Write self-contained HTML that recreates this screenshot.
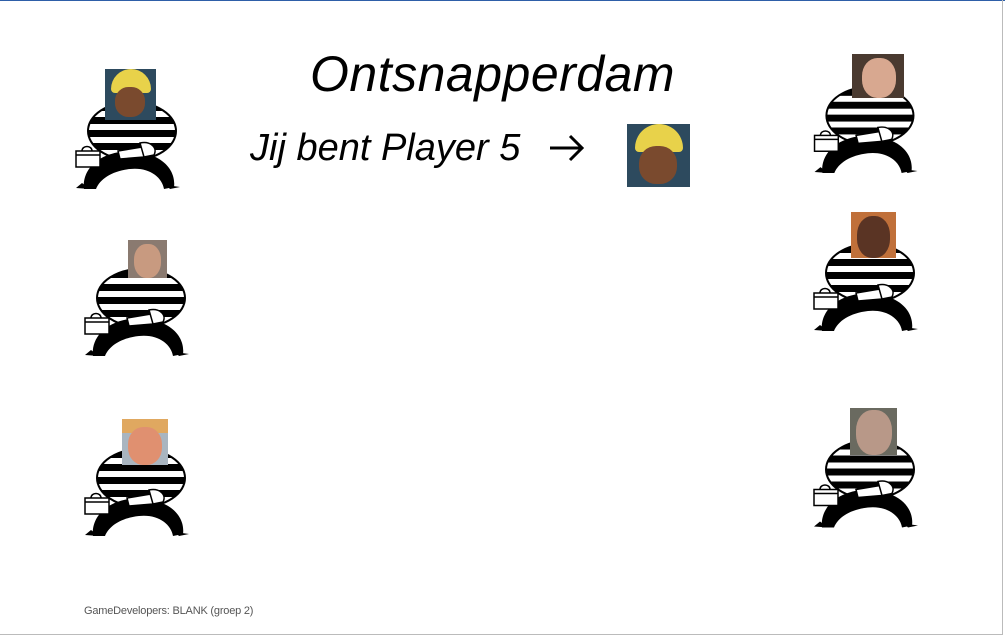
<!DOCTYPE html>
<html><head><meta charset="utf-8"><style>
html,body{margin:0;padding:0;background:#fff;}
body{width:1005px;height:637px;position:relative;overflow:hidden;font-family:"Liberation Sans",sans-serif;}
.top{position:absolute;left:0;top:0;width:1005px;height:1px;background:#2e5fa8;}
.right{position:absolute;left:1002px;top:0;width:1px;height:635px;background:#bbb;}
.bot{position:absolute;left:0;top:634px;width:1003px;height:1px;background:#bbb;}
.title{position:absolute;left:310px;top:45px;font-size:50px;font-style:italic;color:#000;letter-spacing:0.5px;white-space:nowrap;}
.sub{position:absolute;left:250px;top:127px;font-size:38px;font-style:italic;color:#000;white-space:nowrap;}
.foot{position:absolute;left:84px;top:605px;font-size:11px;color:#555;letter-spacing:-0.2px;}
.fig{position:absolute;}
.face{position:absolute;overflow:hidden;}
</style></head><body>
<div class="top"></div><div class="right"></div><div class="bot"></div>
<svg width="0" height="0" style="position:absolute">
<defs>
<clipPath id="tc"><ellipse cx="58" cy="36" rx="44" ry="29"/></clipPath>
<symbol id="pr" viewBox="0 0 106 96">
<g clip-path="url(#tc)">
<rect x="0" y="0" width="106" height="96" fill="#fff"/>
<g fill="#000">
<rect x="10" y="9" width="100" height="7"/><rect x="10" y="22" width="100" height="7"/>
<rect x="10" y="35" width="100" height="7"/><rect x="10" y="48" width="100" height="7"/>
<rect x="10" y="60" width="100" height="7"/>
</g></g>
<ellipse cx="58" cy="36" rx="44" ry="29" fill="none" stroke="#000" stroke-width="2"/>
<path d="M10 94 C8 78 20 58 55 56 C92 58 102 78 100 92 L90 94 C88 82 75 72 56 74 C38 76 26 84 22 94 Z" fill="#000"/>
<path d="M8 88 L2 93 L16 94 Z M92 90 L106 92 L96 94 Z" fill="#000"/>
<rect x="2" y="56" width="24" height="16" fill="#fff" stroke="#000" stroke-width="1.5"/>
<path d="M2 60 L26 60 M8 56 C8 50 18 50 18 56" fill="none" stroke="#000" stroke-width="1.5"/>
<path d="M44 56 L68 52 L70 62 L46 64 Z" fill="#fff" stroke="#000" stroke-width="1.5"/>
<path d="M66 48 C76 46 84 52 80 60 L70 62 Z" fill="#fff" stroke="#000" stroke-width="1.5"/>
</symbol>
</defs></svg>

<div class="title">Ontsnapperdam</div>
<div class="sub">Jij bent Player 5</div>
<svg class="fig" style="left:548px;top:134px" width="38" height="28"><path d="M2 14 L34 14 M22 2 L34 14 L22 26" fill="none" stroke="#000" stroke-width="3"/></svg>
<div class="foot">GameDevelopers: BLANK (groep 2)</div>

<svg class="fig" style="left:74px;top:95px" width="106" height="96"><use href="#pr"/></svg>
<svg class="fig" style="left:82px;top:262px" width="108" height="96"><use href="#pr"/></svg>
<svg class="fig" style="left:82px;top:442px" width="108" height="96"><use href="#pr"/></svg>
<svg class="fig" style="left:812px;top:80px" width="106" height="95"><use href="#pr"/></svg>
<svg class="fig" style="left:812px;top:237px" width="106" height="96"><use href="#pr"/></svg>
<svg class="fig" style="left:812px;top:433px" width="106" height="97"><use href="#pr"/></svg>

<div class="face" style="left:105px;top:69px;width:51px;height:51px;background:#2d4a5e">
 <div style="position:absolute;left:6px;top:0;width:40px;height:24px;background:#e8d24a;border-radius:20px 20px 4px 4px"></div>
 <div style="position:absolute;left:10px;top:18px;width:30px;height:30px;background:#7a4a2e;border-radius:45%"></div>
</div>
<div class="face" style="left:627px;top:124px;width:63px;height:63px;background:#2d4a5e">
 <div style="position:absolute;left:8px;top:0;width:48px;height:28px;background:#e8d24a;border-radius:24px 24px 4px 4px"></div>
 <div style="position:absolute;left:12px;top:22px;width:38px;height:38px;background:#7a4a2e;border-radius:45%"></div>
</div>
<div class="face" style="left:128px;top:240px;width:39px;height:38px;background:#8a7a70">
 <div style="position:absolute;left:6px;top:4px;width:27px;height:34px;background:#c89a80;border-radius:45%"></div>
</div>
<div class="face" style="left:122px;top:419px;width:46px;height:46px;background:#a9b5c0">
 <div style="position:absolute;left:0;top:0;width:46px;height:14px;background:#e0a860"></div>
 <div style="position:absolute;left:6px;top:8px;width:34px;height:38px;background:#e09070;border-radius:45%"></div>
</div>
<div class="face" style="left:852px;top:54px;width:52px;height:44px;background:#4a3a30">
 <div style="position:absolute;left:10px;top:4px;width:34px;height:40px;background:#d8a890;border-radius:45%"></div>
</div>
<div class="face" style="left:851px;top:212px;width:45px;height:46px;background:#c0703a">
 <div style="position:absolute;left:6px;top:4px;width:33px;height:42px;background:#5a3424;border-radius:45%"></div>
</div>
<div class="face" style="left:850px;top:408px;width:47px;height:47px;background:#6a6a60">
 <div style="position:absolute;left:6px;top:2px;width:36px;height:45px;background:#b89888;border-radius:45%"></div>
</div>
</body></html>
